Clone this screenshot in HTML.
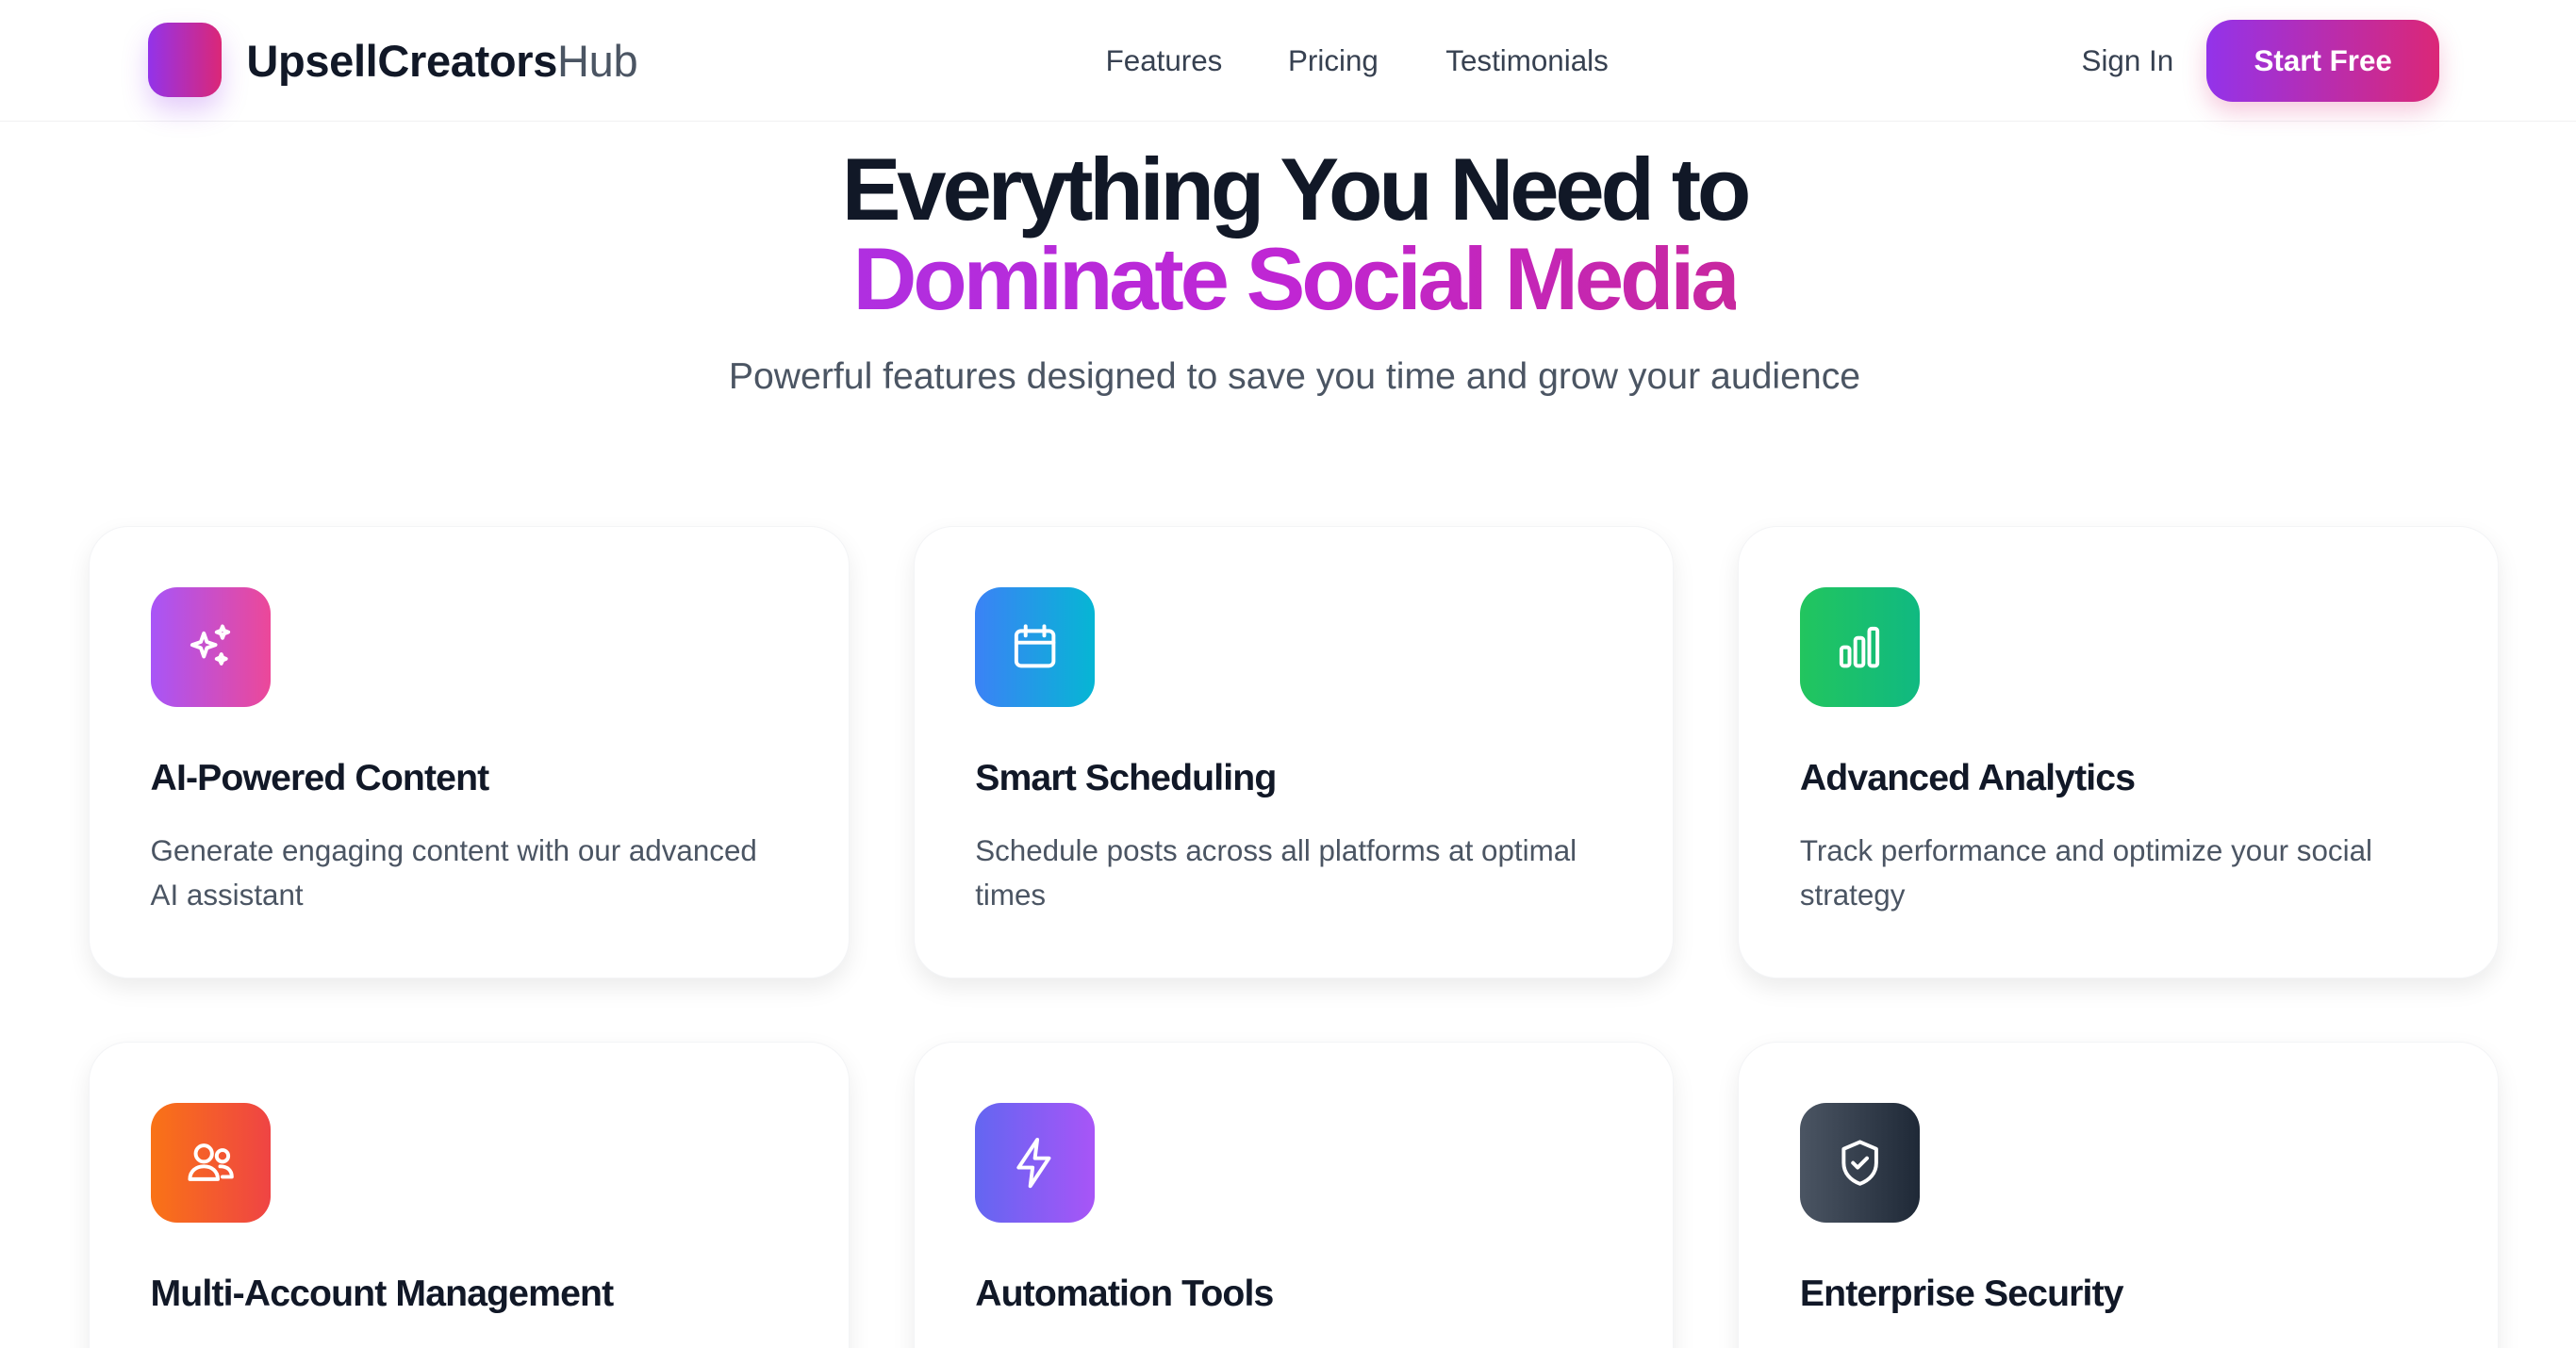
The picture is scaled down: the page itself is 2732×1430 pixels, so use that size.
<!DOCTYPE html>
<html><head><meta charset="utf-8"><style>
*{margin:0;padding:0;box-sizing:border-box}
html,body{width:2732px;height:1430px;overflow:hidden;background:#fff}
#z{zoom:1.74235;width:1568px;height:821px;position:relative;overflow:hidden;font-family:"Liberation Sans",sans-serif;color:#111827}
.nav{position:absolute;left:0;top:0;width:1568px;height:74px;border-bottom:1px solid #f0f0f2}
.logo{position:absolute;left:90px;top:14px;width:45px;height:45px;border-radius:12px;background:linear-gradient(90deg,#9333ea,#db2777);box-shadow:0 8px 16px rgba(147,51,234,.25)}
.brand{position:absolute;left:150px;top:21px;font-size:27px;font-weight:bold;letter-spacing:-0.2px}
.brand span{font-weight:normal;color:#4b5563}
.lnk{position:absolute;top:27px;font-size:18px;color:#374151}
.btn{position:absolute;left:1343px;top:12px;width:142px;height:50px;border-radius:16px;background:linear-gradient(90deg,#9333ea,#db2777);color:#fff;font-size:18px;font-weight:bold;text-align:center;line-height:50px;box-shadow:0 6px 14px rgba(219,39,119,.25)}
h1{position:absolute;left:0;width:1576px;text-align:center;font-size:54px;font-weight:bold;letter-spacing:-2.4px;line-height:56px}
.g{background:linear-gradient(90deg,#b02fe0,#c026d3 50%,#c8279e);-webkit-background-clip:text;color:transparent}
.sub{position:absolute;top:217px;left:0;width:1576px;text-align:center;font-size:22.5px;color:#4b5563}
.card{position:absolute;width:463px;height:276px;border-radius:24px;background:#fff;border:1px solid #f3f4f6;box-shadow:0 6px 14px rgba(0,0,0,.08)}
.ic{position:absolute;left:37px;top:37px;width:73px;height:73px;border-radius:16px;display:flex;align-items:center;justify-content:center}
.t{position:absolute;left:37px;top:141px;font-size:22.5px;font-weight:bold;letter-spacing:-0.5px}
.d{position:absolute;left:37px;top:184px;width:378px;font-size:18px;line-height:27px;color:#4b5563}
svg{width:34px;height:34px;fill:none;stroke:#fff;stroke-width:1.6;stroke-linecap:round;stroke-linejoin:round}
</style></head><body><div id="z">
<div class="nav">
<div class="logo"></div>
<div class="brand">UpsellCreators<span>Hub</span></div>
<div class="lnk" style="left:673px">Features</div>
<div class="lnk" style="left:784px">Pricing</div>
<div class="lnk" style="left:880px">Testimonials</div>
<div class="lnk" style="left:1267px">Sign In</div>
<div class="btn">Start Free</div>
</div>
<h1 style="top:87px">Everything You Need to</h1>
<h1 style="top:142px"><span class="g">Dominate Social Media</span></h1>
<div class="sub">Powerful features designed to save you time and grow your audience</div>

<div class="card" style="left:54px;top:320px"><div class="ic" style="background:linear-gradient(90deg,#a855f7,#ec4899)"><svg viewBox="0 0 24 24"><path d="M9 6l1.3 3.7L14 11l-3.7 1.3L9 16l-1.3-3.7L4 11l3.7-1.3z"/><path d="M17 3l.7 1.8L19.5 5.5l-1.8.7L17 8l-.7-1.8L14.5 5.5l1.8-.7z"/><path d="M16.5 15l.6 1.4 1.4.6-1.4.6-.6 1.4-.6-1.4-1.4-.6 1.4-.6z"/></svg></div><div class="t">AI-Powered Content</div><div class="d">Generate engaging content with our advanced AI assistant</div></div>
<div class="card" style="left:556px;top:320px"><div class="ic" style="background:linear-gradient(90deg,#3b82f6,#06b6d4)"><svg viewBox="0 0 24 24"><rect x="4" y="5" width="16" height="15" rx="2"/><path d="M4 10h16M8 3v4M16 3v4"/></svg></div><div class="t">Smart Scheduling</div><div class="d">Schedule posts across all platforms at optimal times</div></div>
<div class="card" style="left:1058px;top:320px"><div class="ic" style="background:linear-gradient(90deg,#22c55e,#10b981)"><svg viewBox="0 0 24 24"><rect x="4" y="12" width="3.5" height="8" rx="1"/><rect x="10" y="8" width="3.5" height="12" rx="1"/><rect x="16" y="4" width="3.5" height="16" rx="1"/></svg></div><div class="t">Advanced Analytics</div><div class="d">Track performance and optimize your social strategy</div></div>

<div class="card" style="left:54px;top:634px"><div class="ic" style="background:linear-gradient(90deg,#f97316,#ef4444)"><svg viewBox="0 0 24 24"><circle cx="9" cy="8" r="3.5"/><path d="M3 19c0-3.5 2.7-5.5 6-5.5s6 2 6 5.5z"/><circle cx="17" cy="9" r="2.5"/><path d="M16 13.5c3 0 5 1.6 5 4.5h-4"/></svg></div><div class="t">Multi-Account Management</div></div>
<div class="card" style="left:556px;top:634px"><div class="ic" style="background:linear-gradient(90deg,#6366f1,#a855f7)"><svg viewBox="0 0 24 24"><path d="M13 2L5 14h6l-1 8 8-12h-6z"/></svg></div><div class="t">Automation Tools</div></div>
<div class="card" style="left:1058px;top:634px"><div class="ic" style="background:linear-gradient(90deg,#4b5563,#1f2937)"><svg viewBox="0 0 24 24"><path d="M12 3l7 3v6c0 4.5-3 7.5-7 9-4-1.5-7-4.5-7-9V6z"/><path d="M9 12l2 2 4-4"/></svg></div><div class="t">Enterprise Security</div></div>
</div></body></html>
